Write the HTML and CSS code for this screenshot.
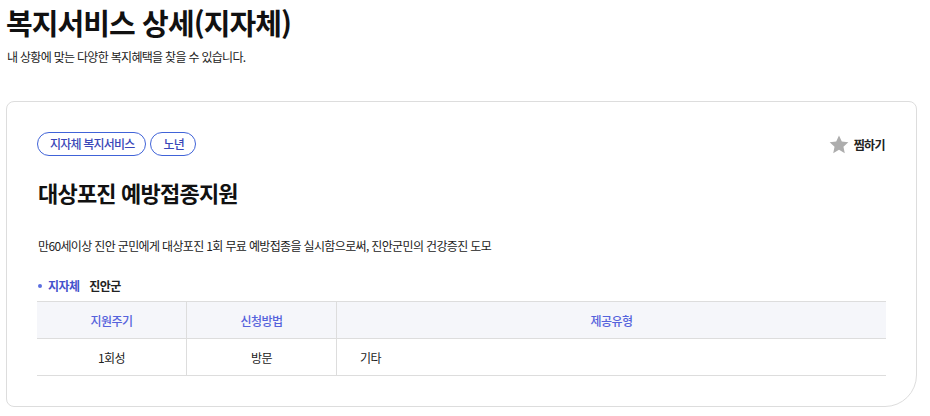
FILE: index.html
```html
<!DOCTYPE html>
<html lang="ko">
<head>
  <meta charset="UTF-8">
  <title>복지서비스 상세(지자체)</title>
  <link rel="stylesheet" href="styles.css">
</head>
<body>
  <div class="page-head">
    <h1>복지서비스 상세(지자체)</h1>
    <p class="page-desc">내 상황에 맞는 다양한 복지혜택을 찾을 수 있습니다.</p>
  </div>

  <div class="card">
    <div class="card-top">
      <div class="tags">
        <span class="tag">지자체 복지서비스</span>
        <span class="tag">노년</span>
      </div>
      <button class="btn-like">
        <svg width="20" height="19" viewBox="0 0 24 23">
          <path d="M12 0.5l3.4 7.3 7.9 0.9-5.9 5.4 1.6 7.9L12 18l-7 4 1.6-7.9L0.7 8.7l7.9-0.9z" fill="#adadad"/>
        </svg>
        <span>찜하기</span>
      </button>
    </div>

    <h2 class="svc-title">대상포진 예방접종지원</h2>
    <p class="svc-desc">만60세이상 진안 군민에게 대상포진 1회 무료 예방접종을 실시함으로써, 진안군민의 건강증진 도모</p>

    <div class="info-row">
      <span class="info-label">지자체</span>
      <span class="info-value">진안군</span>
    </div>

    <table class="svc-table">
      <thead>
        <tr>
          <th class="col-cycle">지원주기</th>
          <th class="col-method">신청방법</th>
          <th>제공유형</th>
        </tr>
      </thead>
      <tbody>
        <tr>
          <td>1회성</td>
          <td>방문</td>
          <td class="cell-left">기타</td>
        </tr>
      </tbody>
    </table>
  </div>
</body>
</html>
```

FILE: styles.css
```css
body {
  margin: 0;
  padding: 0 13px 0 6px;
  font-family: "Noto Sans CJK KR", "Noto Sans", sans-serif;
  color: #222;
  background-color: #fff;
}
.page-head {
  padding-top: 2px;
}
h1 {
  margin: 0;
  font-size: 29px;
  line-height: 40px;
  font-weight: 700;
  letter-spacing: -0.9px;
  color: #111;
}
.page-desc {
  margin: 5px 0 0 1px;
  font-size: 12px;
  line-height: 20px;
  letter-spacing: -0.7px;
  color: #222;
}
.card {
  margin-top: 34px;
  border: 1px solid #ddd;
  border-radius: 8px 8px 32px 8px;
  padding: 30px 30px 30px 30px;
}
.card-top {
  display: flex;
  justify-content: space-between;
  align-items: center;
}
.tags {
  display: flex;
  gap: 4px;
}
.tag {
  display: inline-block;
  height: 22px;
  line-height: 22px;
  padding: 0 11px 0 12px;
  border: 1px solid #4063d8;
  border-radius: 12px;
  font-size: 12px;
  font-weight: 500;
  letter-spacing: -0.8px;
  color: #3a47b8;
}
.btn-like {
  display: flex;
  align-items: center;
  gap: 5px;
  padding: 0;
  margin-right: 1px;
  border: none;
  background: none;
  font-family: inherit;
  font-size: 12px;
  font-weight: 700;
  letter-spacing: -0.6px;
  color: #222;
}
.svc-title {
  margin: 21px 0 0 1px;
  font-size: 22px;
  line-height: 30px;
  font-weight: 700;
  letter-spacing: -0.8px;
  color: #111;
}
.svc-desc {
  margin: 29px 0 0 1px;
  font-size: 12px;
  line-height: 20px;
  letter-spacing: -0.65px;
}
.info-row {
  display: flex;
  align-items: center;
  margin-top: 21px;
  font-size: 12px;
  line-height: 18px;
  font-weight: 700;
  letter-spacing: -0.6px;
}
.info-label {
  position: relative;
  padding-left: 11px;
  margin-right: 10px;
  color: #4452cc;
}
.info-label::before {
  content: "";
  position: absolute;
  left: 1px;
  top: 7px;
  width: 4px;
  height: 4px;
  border-radius: 50%;
  background-color: #5b6ee0;
}
.info-value {
  color: #222;
}
.svc-table {
  width: 100%;
  margin-top: 6px;
  border-collapse: collapse;
  font-size: 12px;
  letter-spacing: -0.6px;
}
.svc-table th,
.svc-table td {
  height: 36px;
  padding: 0;
  border-top: 1px solid #ddd;
  border-bottom: 1px solid #ddd;
  text-align: center;
}
.svc-table th + th,
.svc-table td + td {
  border-left: 1px solid #ddd;
}
.svc-table th {
  background-color: #f5f6fa;
  font-weight: 500;
  color: #5563dc;
}
.svc-table td {
  color: #222;
}
.col-cycle {
  width: 149px;
}
.col-method {
  width: 149px;
}
.svc-table .cell-left {
  text-align: left;
  padding-left: 23px;
}
```
